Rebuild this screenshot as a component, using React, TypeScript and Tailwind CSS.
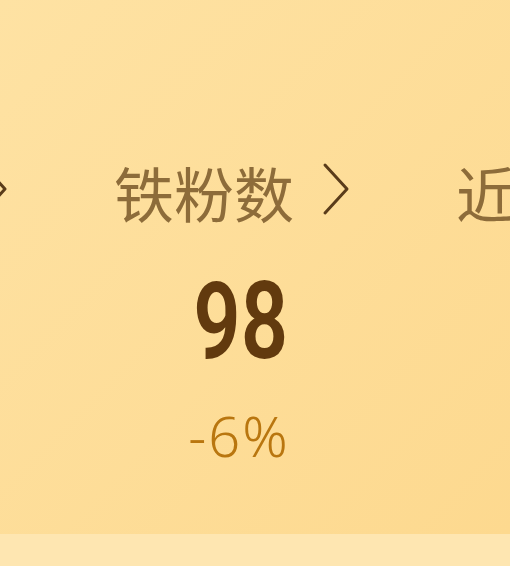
const stats = [
  { label: "粉丝数", value: "356", change: "+3%" },
  { label: "铁粉数", value: "98", change: "-6%" },
  { label: "近7日", value: "26", change: "+2%" },
];

function Chevron() {
  return (
    <svg width="28" height="54" viewBox="0 0 28 54" fill="none" className="mb-[6px] shrink-0">
      <path d="M3 3 L25 27 L3 51" stroke="#5a3c1a" strokeWidth="3" strokeLinecap="round" strokeLinejoin="round" />
    </svg>
  );
}

function StatColumn({ label, value, change }: { label: string; value: string; change: string }) {
  return (
    <div className="flex shrink-0 flex-col items-center">
      <div className="flex h-[60px] items-center gap-[28px]">
        <span className="text-[60px] leading-[60px] text-[#8d6c3a] [font-family:'Noto_Sans_CJK_SC',sans-serif]">
          {label}
        </span>
        <Chevron />
      </div>
      <div className="mt-[45px] h-[108px] pl-[18px] text-[108px] leading-[108px] font-semibold text-[#623a0e] [font-family:Roboto,sans-serif]">
        <span className="inline-block origin-center scale-x-[0.77]">{value}</span>
      </div>
      <div className="mt-[34px] pl-[14px] text-[56px] leading-[52px] font-light tracking-[2px] text-[#b9760f] [font-family:'Noto_Sans',sans-serif]">
        {change}
      </div>
    </div>
  );
}

export default function App() {
  return (
    <div className="flex h-[566px] w-[510px] flex-col overflow-hidden">
      <div className="h-[534px] overflow-hidden bg-gradient-to-br from-[#fee2a3] to-[#fdd98f] pt-[162px]">
        <div className="ml-[-228px] flex gap-[106px]">
          {stats.map((s) => (
            <StatColumn key={s.label} {...s} />
          ))}
        </div>
      </div>
      <div className="flex-1 bg-[#fee6b1]" />
    </div>
  );
}
